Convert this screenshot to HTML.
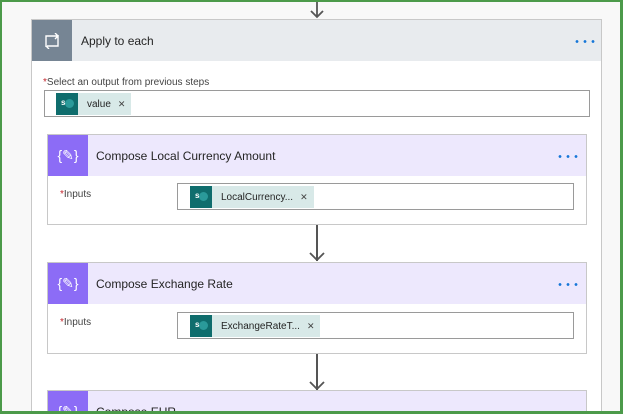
<!DOCTYPE html><html><head><style>
*{box-sizing:border-box;margin:0;padding:0}
html,body{width:623px;height:414px;overflow:hidden}
body{background:#f8f8f8;font-family:"Liberation Sans",sans-serif;position:relative}
#w{position:absolute;left:0;top:0;width:623px;height:414px;overflow:hidden}
.frame{position:absolute;left:0;top:0;width:623px;height:414px;border:2px solid #4c9a4a;border-right-width:3px;border-bottom-width:3px;z-index:10}
.ab{position:absolute}
.card{position:absolute;background:#fff;border:1px solid #c8c8c8}
.hdr{position:absolute;left:0;right:0;top:0}
.ic{position:absolute;left:0;top:0;display:flex;align-items:center;justify-content:center;color:#fff}
.title{position:absolute;font-size:12px;color:#252525}
.dots{position:absolute;width:24px;height:3px;background:radial-gradient(circle,#1677d8 1.2px,transparent 1.6px) 0 0/8px 3px repeat-x}
.box{position:absolute;border:1px solid #9a9a9a;background:#fff}
.tok{position:absolute;background:#d8e9e8;height:22px;display:flex;align-items:center;font-size:10px;color:#252525}
.sp{width:22px;height:22px;background:#0f6d6d;position:relative}
.sp:before{content:"";position:absolute;left:9px;top:6px;width:9px;height:9px;border-radius:50%;background:#2a9a9a}
.sp:after{content:"s";position:absolute;left:5px;top:5px;font-size:8px;color:#fff;font-weight:bold}
.x{font-size:9px;color:#444;margin-left:7px}
.lbl{position:absolute;font-size:10px;color:#444}
.lbl b{color:#c4262e;font-weight:normal}
.arr{position:absolute;width:2px;background:#555}
</style></head><body><div id="w">
<div class="frame"></div>
<svg class="ab" style="left:310px;top:0" width="16" height="19"><path d="M7 0V17M1 11L7 17L13 11" stroke="#555" stroke-width="1.8" fill="none"/></svg>
<div class="card" style="left:31px;top:19px;width:571px;height:395px">
 <div class="hdr" style="height:41px;background:#e8ebee"></div>
 <div class="ic" style="width:40px;height:41px;background:#768594">
  <svg width="20" height="16"><path d="M4 14V3H16M13 0L16 3L13 6M16 2V13H5M7 16L4 13" stroke="#fff" stroke-width="1.4" fill="none"/></svg>
 </div>
 <div class="title" style="left:49px;top:14px">Apply to each</div>
 <div class="dots" style="left:541px;top:20px"></div>
 <div class="lbl" style="left:11px;top:57px"><b>*</b>Select an output from previous steps</div>
 <div class="box" style="left:12px;top:70px;width:546px;height:27px">
  <div class="tok" style="left:11px;top:2px;padding-right:6px"><div class="sp"></div><span style="margin-left:9px">value</span><span class="x">✕</span></div>
 </div>
</div>
<div class="card" style="left:47px;top:134px;width:540px;height:91px">
 <div class="hdr" style="height:41px;background:#ede8fd"></div>
 <div class="ic" style="width:40px;height:41px;background:#8c6cf6;font-size:14px">{✎}</div>
 <div class="title" style="left:48px;top:14px">Compose Local Currency Amount</div>
 <div class="dots" style="left:508px;top:20px"></div>
 <div class="lbl" style="left:12px;top:54px"><b>*</b>Inputs</div>
 <div class="box" style="left:129px;top:48px;width:397px;height:27px">
  <div class="tok" style="left:12px;top:2px;padding-right:6px"><div class="sp"></div><span style="margin-left:9px">LocalCurrency...</span><span class="x">✕</span></div>
 </div>
</div>
<div class="arr" style="left:316px;top:225px;height:36px"></div>
<svg class="ab" style="left:309px;top:250px" width="16" height="12"><path d="M1 3L8 10L15 3" stroke="#555" stroke-width="1.8" fill="none"/></svg>
<div class="card" style="left:47px;top:262px;width:540px;height:92px">
 <div class="hdr" style="height:41px;background:#ede8fd"></div>
 <div class="ic" style="width:40px;height:41px;background:#8c6cf6;font-size:14px">{✎}</div>
 <div class="title" style="left:48px;top:14px">Compose Exchange Rate</div>
 <div class="dots" style="left:508px;top:20px"></div>
 <div class="lbl" style="left:12px;top:54px"><b>*</b>Inputs</div>
 <div class="box" style="left:129px;top:49px;width:397px;height:27px">
  <div class="tok" style="left:12px;top:2px;padding-right:6px"><div class="sp"></div><span style="margin-left:9px">ExchangeRateT...</span><span class="x">✕</span></div>
 </div>
</div>
<div class="arr" style="left:316px;top:354px;height:36px"></div>
<svg class="ab" style="left:309px;top:379px" width="16" height="12"><path d="M1 3L8 10L15 3" stroke="#555" stroke-width="1.8" fill="none"/></svg>
<div class="card" style="left:47px;top:390px;width:540px;height:24px;overflow:hidden">
 <div class="hdr" style="height:41px;background:#ede8fd"></div>
 <div class="ic" style="width:40px;height:41px;background:#8c6cf6;font-size:14px">{✎}</div>
 <div class="title" style="left:48px;top:14px">Compose EUR</div>
 <div class="dots" style="left:508px;top:20px"></div>
</div>
</div></body></html>
